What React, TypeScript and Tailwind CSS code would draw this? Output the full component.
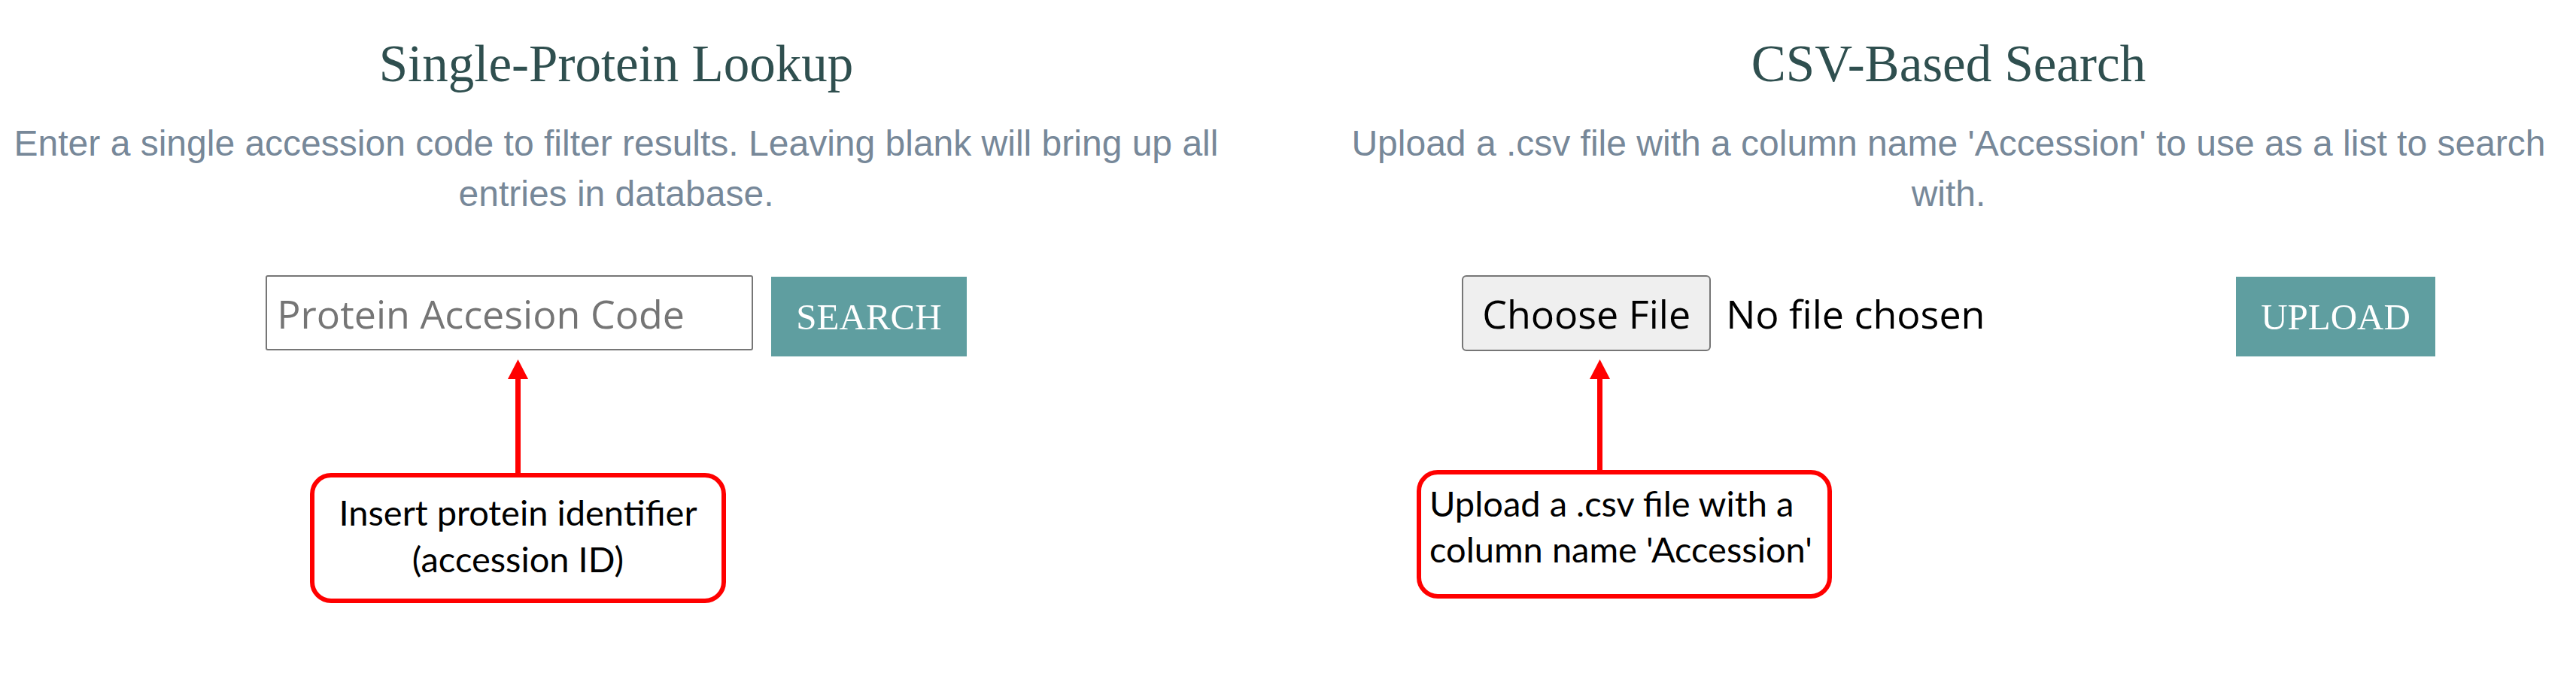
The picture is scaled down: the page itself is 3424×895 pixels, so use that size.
import React from "react";

const serif = { fontFamily: '"Liberation Serif", "Times New Roman", serif' };

function Arrow({ height }: { height: number }) {
  return (
    <svg width="27" height={height} viewBox={`0 0 27 ${height}`} className="block">
      <polygon points="13.5,0 0,26 27,26" fill="#ff0000" />
      <rect x="10" y="25" width="7" height={height - 25} fill="#ff0000" />
    </svg>
  );
}

function TealButton({ label }: { label: string }) {
  return (
    <button
      type="button"
      className="mt-[2px] h-[106px] px-[33px] bg-[#5f9ea0] text-white text-[49px] leading-none font-['Liberation_Serif',serif]"
    >
      {label}
    </button>
  );
}

export default function App() {
  return (
    <div className="w-[3424px] h-[895px] bg-white flex gap-[133px] overflow-hidden">
      {/* Single protein lookup */}
      <section className="w-[1638px] flex flex-col items-center">
        <h2
          className="mt-[44px] text-[69px] leading-[83px] text-[#2f4f4f]"
          style={serif}
        >
          Single-Protein Lookup
        </h2>
        <p className="mt-[30px] max-w-[1625px] text-center text-[48px] leading-[67px] text-[#778899] font-['Liberation_Sans',Arial,sans-serif]">
          Enter a single accession code to filter results. Leaving blank will bring up all entries in database.
        </p>

        <div className="mt-[75px] flex items-start gap-[24px]">
          <input
            type="text"
            placeholder="Protein Accesion Code"
            className="w-[648px] h-[100px] border-2 border-[#767676] rounded-[3px] pl-[13px] text-[52px] font-['Open_Sans',sans-serif] placeholder:text-[#757575] outline-none"
          />
          <TealButton label="SEARCH" />
        </div>

        <div className="self-start ml-[412px] mt-[4px] flex flex-col items-center">
          <Arrow height={151} />
          <div className="w-[553px] h-[173px] border-[6px] border-[#ff0000] rounded-[28px] pt-[15px] text-center text-[47px] leading-[62px] text-black font-['Lato',sans-serif]">
            Insert protein identifier
            <br />
            (accession ID)
          </div>
        </div>
      </section>

      {/* CSV based search */}
      <section className="w-[1638px] flex flex-col items-center">
        <h2
          className="mt-[44px] text-[69px] leading-[83px] text-[#2f4f4f]"
          style={serif}
        >
          CSV-Based Search
        </h2>
        <p className="mt-[30px] max-w-[1625px] text-center text-[48px] leading-[67px] text-[#778899] font-['Liberation_Sans',Arial,sans-serif]">
          Upload a .csv file with a column name 'Accession' to use as a list to search with.
        </p>

        <div className="mt-[75px] flex items-start gap-[24px]">
          <div className="w-[1005px] h-[101px] flex items-center gap-[20px] font-['Open_Sans',sans-serif] text-[52px] text-black">
            <button
              type="button"
              className="w-[331px] h-[101px] flex items-center justify-center bg-[#efefef] border-2 border-[#767676] rounded-[6px]"
            >
              Choose File
            </button>
            <span>No file chosen</span>
          </div>
          <TealButton label="UPLOAD" />
        </div>

        <div className="self-start ml-[112px] mt-[4px] flex flex-col items-start">
          <div className="ml-[230px]">
            <Arrow height={147} />
          </div>
          <div className="w-[552px] h-[171px] border-[6px] border-[#ff0000] rounded-[28px] pt-[8px] pl-[11px] text-left text-[47px] leading-[61px] text-black font-['Lato',sans-serif]">
            Upload a .csv file with a
            <br />
            column name 'Accession'
          </div>
        </div>
      </section>
    </div>
  );
}
